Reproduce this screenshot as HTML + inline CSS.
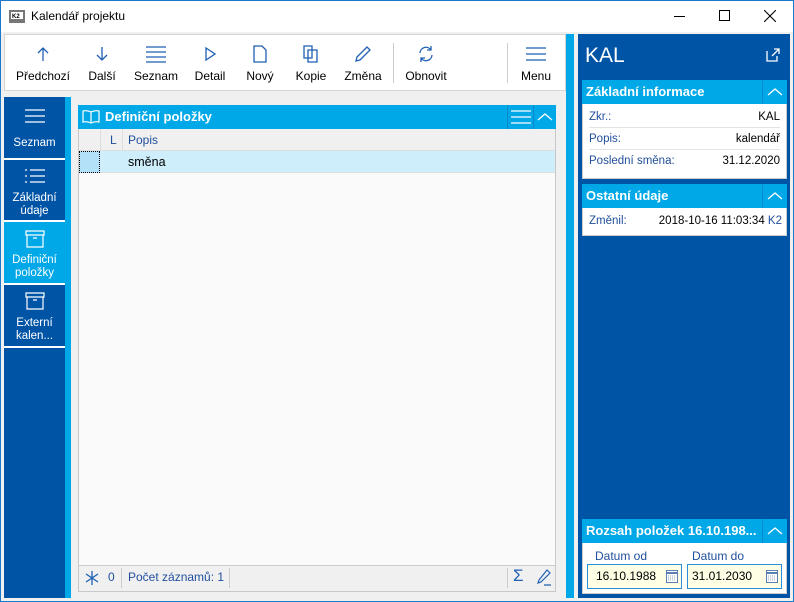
<!DOCTYPE html>
<html><head><meta charset="utf-8"><style>
*{margin:0;padding:0;box-sizing:border-box}
body{width:794px;height:602px;position:relative;overflow:hidden;background:#f0f0f0;font-family:"Segoe UI","Liberation Sans","DejaVu Sans",sans-serif;font-size:12px;color:#000}
.a{position:absolute}
.frame{left:0;top:0;width:794px;height:602px;border:1px solid #1979ca}
.title{left:1px;top:1px;width:792px;height:31px;background:#fff}
.tb{left:4px;top:34px;width:562px;height:57px;background:#fff;border:1px solid #d4d4d4}
.btn{position:absolute;top:0;height:55px;text-align:center;font-size:12px}
.ic{height:20px;margin-top:9px;margin-bottom:5px;display:flex;justify-content:center;align-items:center}
.nav{left:4px;top:97px;width:61px;height:501px;background:#0054a6}
.ni{position:absolute;left:0;width:61px;color:#fff;text-align:center;font-size:11.5px;line-height:13px;border-bottom:2px solid #fff}
.ni svg{position:absolute;left:50%;transform:translateX(-50%)}
.ni div{position:absolute;left:0;width:61px}
.cy{background:#00a8e8}
.ph{background:#00a8e8;color:#fff;font-weight:bold;font-size:13px}
.rp{left:578px;top:34px;width:212px;height:564px;background:#0054a6}
.sh{position:absolute;left:4px;width:205px;height:24px;background:#00a8e8;color:#fff;font-weight:bold;font-size:13px;line-height:24px;padding-left:4px}
.sb{position:absolute;left:4px;width:205px;background:#fff;border:1px solid #ccc;border-top:none}
.row{height:22px;margin:0 6px;border-bottom:1px solid #e4e4e4;display:flex;justify-content:space-between;line-height:22px;font-size:11.5px}
.row span:first-child{color:#1f4e9c}
.chev{position:absolute;right:0;top:0;width:25px;height:24px;border-left:1px solid #0a8ccc}
</style></head><body>
<div class="a frame"></div>
<div class="a title">
 <svg class="a" style="left:8px;top:9px" width="16" height="14"><rect x="0" y="0" width="16" height="13" fill="#777"/><rect x="2" y="2" width="12" height="7" fill="#fff"/><text x="3" y="8" font-size="6" font-weight="bold" font-family="Liberation Sans">K2</text></svg>
 <div class="a" style="left:30px;top:8px;font-size:12px">Kalendář projektu</div>
 <div class="a" style="left:673px;top:15px;width:11px;height:1px;background:#000"></div>
 <div class="a" style="left:718px;top:9px;width:11px;height:11px;border:1px solid #000"></div>
 <svg class="a" style="left:763px;top:9px" width="12" height="12"><path d="M0 0L12 12M12 0L0 12" stroke="#000" stroke-width="1.1"/></svg>
</div>
<div class="a tb">
 <div class="btn" style="left:8px;width:60px"><div class="ic"><svg width="16" height="16"><path d="M8 2V15M3 7L8 2L13 7" stroke="#1f5fb4" fill="none" stroke-width="1.3"/></svg></div>Předchozí</div>
 <div class="btn" style="left:79px;width:36px"><div class="ic"><svg width="16" height="16"><path d="M8 1V14M3 9L8 14L13 9" stroke="#1f5fb4" fill="none" stroke-width="1.3"/></svg></div>Další</div>
 <div class="btn" style="left:126px;width:50px"><div class="ic"><svg width="22" height="18"><path d="M1 2H21M1 7H21M1 12H21M1 17H21" stroke="#1f5fb4" stroke-width="1.3"/></svg></div>Seznam</div>
 <div class="btn" style="left:187px;width:36px"><div class="ic"><svg width="16" height="16"><path d="M4 2L13 8L4 14Z" stroke="#1f5fb4" fill="none" stroke-width="1.3"/></svg></div>Detail</div>
 <div class="btn" style="left:237px;width:36px"><div class="ic"><svg width="16" height="18"><path d="M2 1H10L14 5V17H2Z" stroke="#1f5fb4" fill="none" stroke-width="1.3"/></svg></div>Nový</div>
 <div class="btn" style="left:286px;width:40px"><div class="ic"><svg width="18" height="18"><path d="M2 1H10V13H2Z M6 5H15V17H6Z" stroke="#1f5fb4" fill="#fff" stroke-width="1.3"/></svg></div>Kopie</div>
 <div class="btn" style="left:336px;width:44px"><div class="ic"><svg width="18" height="18"><path d="M13 2L16 5L6 15L2 16L3 12Z" stroke="#1f5fb4" fill="none" stroke-width="1.3"/></svg></div>Změna</div>
 <div class="a" style="left:388px;top:8px;width:1px;height:40px;background:#ccc"></div>
 <div class="btn" style="left:396px;width:50px"><div class="ic"><svg width="18" height="18"><path d="M3 8A6 6 0 0 1 14 5M15 10A6 6 0 0 1 4 13M14 1V5H10M4 17V13H8" stroke="#1f5fb4" fill="none" stroke-width="1.3"/></svg></div>Obnovit</div>
 <div class="a" style="left:502px;top:8px;width:1px;height:40px;background:#ccc"></div>
 <div class="btn" style="left:510px;width:42px"><div class="ic"><svg width="22" height="16"><path d="M1 2H21M1 8H21M1 14H21" stroke="#1f5fb4" stroke-width="1.3"/></svg></div>Menu</div>
</div>
<div class="a cy" style="left:566px;top:34px;width:8px;height:564px"></div>
<div class="a nav">
 <div class="ni" style="top:0;height:63px"><svg style="top:11px" width="22" height="16"><path d="M1 2H21M1 8H21M1 14H21" stroke="#fff" stroke-width="1.2"/></svg><div style="top:40px">Seznam</div></div>
 <div class="ni" style="top:63px;height:62px"><svg style="top:8px" width="22" height="16"><path d="M1 2H3M6 2H21M1 8H3M6 8H21M1 14H3M6 14H21" stroke="#fff" stroke-width="1.2"/></svg><div style="top:32px">Základní<br>údaje</div></div>
 <div class="ni cy" style="top:125px;height:63px"><svg style="top:8px" width="20" height="18"><path d="M1 1H19V5H1ZM2 5V17H18V5M8 8H12" stroke="#fff" fill="none" stroke-width="1.2"/></svg><div style="top:32px">Definiční<br>položky</div></div>
 <div class="ni" style="top:188px;height:63px"><svg style="top:7px" width="20" height="18"><path d="M1 1H19V5H1ZM2 5V17H18V5M8 8H12" stroke="#fff" fill="none" stroke-width="1.2"/></svg><div style="top:32px">Externí<br>kalen...</div></div>
</div>
<div class="a cy" style="left:65px;top:97px;width:6px;height:501px"></div>
<div class="a" style="left:78px;top:105px;width:478px;height:487px;background:#fafafa;border:1px solid #c8c8c8"></div>
<div class="a ph" style="left:78px;top:105px;width:478px;height:24px;line-height:24px;padding-left:27px">Definiční položky
 <svg class="a" style="left:4px;top:4px" width="18" height="16"><path d="M9 3Q5 1 1 2V13Q5 12 9 14Q13 12 17 13V2Q13 1 9 3V14" stroke="#fff" fill="none" stroke-width="1.2"/></svg>
 <div class="a" style="left:429px;top:0;width:1px;height:24px;background:#0a8ccc"></div>
 <svg class="a" style="left:433px;top:5px" width="20" height="14"><path d="M0 1H20M0 7H20M0 13H20" stroke="#fff" stroke-width="1.2"/></svg>
 <div class="a" style="left:455px;top:0;width:1px;height:24px;background:#0a8ccc"></div>
 <svg class="a" style="left:459px;top:7px" width="16" height="10"><path d="M1 8L8 2L15 8" stroke="#fff" fill="none" stroke-width="1.3"/></svg>
</div>
<div class="a" style="left:79px;top:129px;width:476px;height:22px;background:#f0f0f0;border-bottom:1px solid #ddd"></div>
<div class="a" style="left:100px;top:129px;width:1px;height:44px;background:#ddd"></div>
<div class="a" style="left:122px;top:129px;width:1px;height:44px;background:#ddd"></div>
<div class="a" style="left:110px;top:133px;color:#1f4e9c">L</div>
<div class="a" style="left:128px;top:133px;color:#1f4e9c">Popis</div>
<div class="a" style="left:79px;top:151px;width:476px;height:22px;background:#cdeefa;border-bottom:1px solid #ddd"></div>
<div class="a" style="left:79px;top:151px;width:21px;height:22px;background:#b3e2f8;border:1px dotted #000"></div>
<div class="a" style="left:128px;top:155px;font-size:12.5px">směna</div>
<div class="a" style="left:79px;top:565px;width:476px;height:26px;background:#f0f0f0;border-top:1px solid #ccc"></div>
<svg class="a" style="left:84px;top:570px" width="16" height="16"><path d="M8 1V15M2 4L14 12M14 4L2 12" stroke="#1f5fb4" stroke-width="1.3"/></svg>
<div class="a" style="left:108px;top:570px;color:#1f4e9c">0</div>
<div class="a" style="left:121px;top:568px;width:1px;height:20px;background:#ccc"></div>
<div class="a" style="left:128px;top:570px;color:#1f4e9c">Počet záznamů: 1</div>
<div class="a" style="left:229px;top:568px;width:1px;height:20px;background:#ccc"></div>
<div class="a" style="left:507px;top:568px;width:1px;height:20px;background:#ccc"></div>
<div class="a" style="left:513px;top:566px;color:#1f5fb4;font-size:17px">Σ</div>
<svg class="a" style="left:536px;top:569px" width="16" height="17"><path d="M11 1L14 4L5 13L2 14L3 11Z M8 16H15" stroke="#1f5fb4" fill="none" stroke-width="1.2"/></svg>

<div class="a rp">
 <div class="a" style="left:7px;top:10px;color:#fff;font-size:21px">KAL</div>
 <svg class="a" style="left:188px;top:14px" width="14" height="14"><path d="M1 3V13H11V8M6 8L13 1M8 1H13V6" stroke="#fff" fill="none" stroke-width="1.3"/></svg>
 <div class="sh" style="top:46px">Základní informace<div class="chev"><svg style="margin:7px 4px" width="16" height="10"><path d="M1 8L8 2L15 8" stroke="#fff" fill="none" stroke-width="1.3"/></svg></div></div>
 <div class="sb" style="top:70px;height:75px;padding-top:2px">
  <div class="row"><span>Zkr.:</span><span>KAL</span></div>
  <div class="row"><span>Popis:</span><span>kalendář</span></div>
  <div class="row" style="border:none"><span>Poslední směna:</span><span>31.12.2020</span></div>
 </div>
 <div class="sh" style="top:150px">Ostatní údaje<div class="chev"><svg style="margin:7px 4px" width="16" height="10"><path d="M1 8L8 2L15 8" stroke="#fff" fill="none" stroke-width="1.3"/></svg></div></div>
 <div class="sb" style="top:174px;height:28px">
  <div class="row" style="border:none;margin:2px 4px 0 6px"><span>Změnil:</span><span>2018-10-16 11:03:34 <b style="font-weight:normal;color:#1f4e9c">K2</b></span></div>
 </div>
 <div class="sh" style="top:485px">Rozsah položek 16.10.198...<div class="chev"><svg style="margin:7px 4px" width="16" height="10"><path d="M1 8L8 2L15 8" stroke="#fff" fill="none" stroke-width="1.3"/></svg></div></div>
 <div class="sb" style="top:509px;height:51px">
  <div class="a" style="left:12px;top:6px;color:#1f4e9c">Datum od</div>
  <div class="a" style="left:109px;top:6px;color:#1f4e9c">Datum do</div>
  <div class="a" style="left:4px;top:21px;width:95px;height:25px;border:1px solid #2a8fd6;background:#ffffe6;line-height:23px;padding-left:8px">16.10.1988</div>
  <div class="a" style="left:104px;top:21px;width:95px;height:25px;border:1px solid #2a8fd6;background:#ffffe6;line-height:23px;padding-left:4px">31.01.2030</div>
  <svg class="a" style="left:83px;top:27px" width="12" height="13"><rect x="0.5" y="0.5" width="11" height="12" fill="#fff" stroke="#5a7fb4"/><path d="M0 3H12" stroke="#5a7fb4" stroke-width="2"/><path d="M2 6H10M2 8H10M2 10H10" stroke="#9ab" stroke-dasharray="1 1"/></svg>
  <svg class="a" style="left:183px;top:27px" width="12" height="13"><rect x="0.5" y="0.5" width="11" height="12" fill="#fff" stroke="#5a7fb4"/><path d="M0 3H12" stroke="#5a7fb4" stroke-width="2"/><path d="M2 6H10M2 8H10M2 10H10" stroke="#9ab" stroke-dasharray="1 1"/></svg>
 </div>
</div>
</body></html>
